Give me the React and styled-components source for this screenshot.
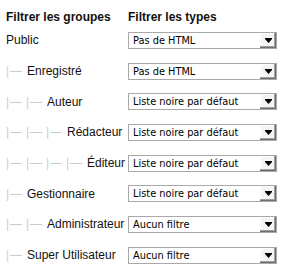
import React from "react";
import styled, { createGlobalStyle } from "styled-components";

const GlobalStyle = createGlobalStyle`
    body {
        margin: 0;
        background: #ffffff;
        font-family: "Liberation Sans", Arial, sans-serif;
    }
`;

const Panel = styled.div`
    display: grid;
    grid-template-columns: 122px 149px;
    grid-template-rows: 15px;
    grid-auto-rows: 30.7px;
    padding: 10px 0 0 6px;
    font-family: "Liberation Sans", Arial, sans-serif;
`;

const Heading = styled.div`
    line-height: 15px;
    font-size: 12px;
    font-weight: bold;
    color: #111111;
    white-space: nowrap;
`;

const Label = styled.div`
    display: flex;
    align-items: center;
    font-size: 12px;
    color: #111111;
    white-space: nowrap;
`;

const Guide = styled.span`
    display: inline-block;
    width: 20px;
    flex: none;
    color: #cccccc;
    letter-spacing: 1px;
`;

const Name = styled.span`
    padding-left: ${(props) => (props.$nested ? 1 : 0)}px;
`;

const Dropdown = styled.div`
    align-self: center;
    display: flex;
    align-items: center;
    height: 17px;
    box-sizing: border-box;
    border: 1px solid #a9a9a9;
    background: #ffffff;
    font-family: "DejaVu Sans", Verdana, sans-serif;
    font-size: 9.8px;
    color: #000000;
`;

const DropdownText = styled.span`
    flex: 1;
    padding-left: 4px;
`;

const DropdownButton = styled.span`
    width: 16px;
    height: 15px;
    display: flex;
    align-items: center;
    justify-content: center;
    background: #f4f4f4;
    box-shadow: inset -1px -1px 0 #6f6f6f, inset -2px -2px 0 #a0a0a0,
        inset 1px 1px 0 #ffffff;
`;

const rows = [
    { level: 0, name: "Public", filter: "Pas de HTML" },
    { level: 1, name: "Enregistré", filter: "Pas de HTML" },
    { level: 2, name: "Auteur", filter: "Liste noire par défaut" },
    { level: 3, name: "Rédacteur", filter: "Liste noire par défaut" },
    { level: 4, name: "Éditeur", filter: "Liste noire par défaut" },
    { level: 1, name: "Gestionnaire", filter: "Liste noire par défaut" },
    { level: 2, name: "Administrateur", filter: "Aucun filtre" },
    { level: 1, name: "Super Utilisateur", filter: "Aucun filtre" },
];

function Arrow() {
    return (
        <svg width="7" height="5" viewBox="0 0 7 5">
            <rect x="0" y="0" width="7" height="1" fill="#000" />
            <polygon points="0,1 7,1 3.5,5" fill="#000" />
        </svg>
    );
}

function App() {
    return (
        <>
            <GlobalStyle />
            <Panel>
                <Heading>Filtrer les groupes</Heading>
                <Heading>Filtrer les types</Heading>
                {rows.map((row) => (
                    <React.Fragment key={row.name}>
                        <Label>
                            {Array.from({ length: row.level }, (_, i) => (
                                <Guide key={i}>|—</Guide>
                            ))}
                            <Name $nested={row.level > 0}>{row.name}</Name>
                        </Label>
                        <Dropdown>
                            <DropdownText>{row.filter}</DropdownText>
                            <DropdownButton>
                                <Arrow />
                            </DropdownButton>
                        </Dropdown>
                    </React.Fragment>
                ))}
            </Panel>
        </>
    );
}

export default App;
